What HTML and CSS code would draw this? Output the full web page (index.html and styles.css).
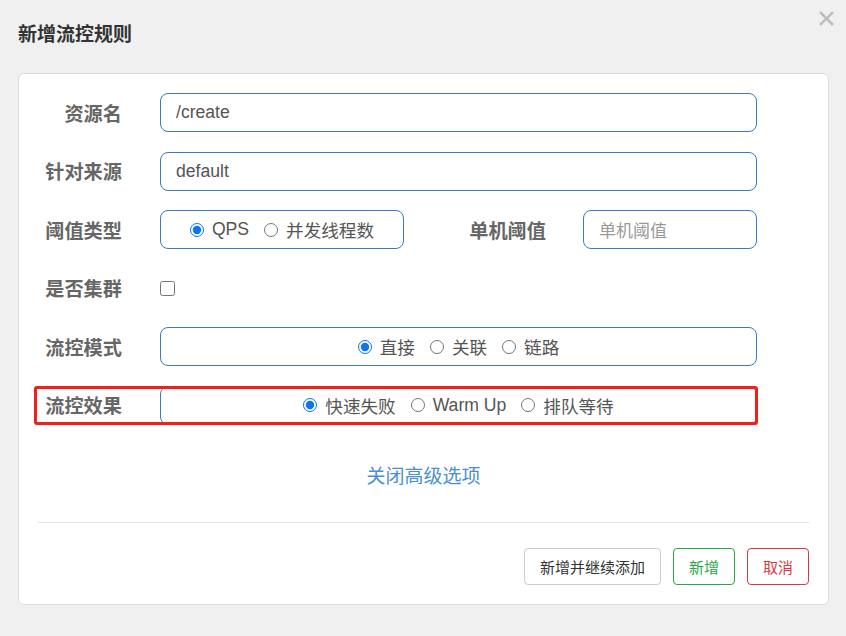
FILE: index.html
```html
<!DOCTYPE html>
<html lang="zh-CN">
<head>
<meta charset="utf-8">
<title>新增流控规则</title>
<link rel="stylesheet" href="styles.css">
</head>
<body>
<div class="dialog">
  <div class="header">
    <h3 class="title">新增流控规则</h3>
    <button class="close" type="button" aria-label="close">
      <svg width="15" height="15" viewBox="0 0 15 15"><path d="M2 2 L13 13 M13 2 L2 13" stroke="#bdbdbd" stroke-width="2.6" stroke-linecap="square"/></svg>
    </button>
  </div>
  <div class="card">
    <form class="form">
      <div class="row">
        <label class="label">资源名</label>
        <div class="input">/create</div>
      </div>
      <div class="row">
        <label class="label">针对来源</label>
        <div class="input">default</div>
      </div>
      <div class="row">
        <label class="label">阈值类型</label>
        <div class="group group-small">
          <label class="opt"><input type="radio" name="t" checked><span>QPS</span></label>
          <label class="opt"><input type="radio" name="t"><span>并发线程数</span></label>
        </div>
        <label class="label label-wide">单机阈值</label>
        <div class="input placeholder">单机阈值</div>
      </div>
      <div class="row">
        <label class="label">是否集群</label>
        <input class="check" type="checkbox">
      </div>
      <div class="row">
        <label class="label">流控模式</label>
        <div class="group">
          <label class="opt"><input type="radio" name="m" checked><span>直接</span></label>
          <label class="opt"><input type="radio" name="m"><span>关联</span></label>
          <label class="opt"><input type="radio" name="m"><span>链路</span></label>
        </div>
      </div>
      <div class="row row-marked">
        <label class="label">流控效果</label>
        <div class="group">
          <label class="opt"><input type="radio" name="e" checked><span>快速失败</span></label>
          <label class="opt"><input type="radio" name="e"><span>Warm Up</span></label>
          <label class="opt"><input type="radio" name="e"><span>排队等待</span></label>
        </div>
        <div class="mark"></div>
      </div>
    </form>
    <div class="toggle"><a class="link">关闭高级选项</a></div>
    <div class="divider"></div>
    <div class="footer">
      <button class="btn btn-default" type="button">新增并继续添加</button>
      <button class="btn btn-green" type="button">新增</button>
      <button class="btn btn-red" type="button">取消</button>
    </div>
  </div>
</div>
</body>
</html>
```
FILE: styles.css
```css
* { box-sizing: border-box; }
html, body {
  margin: 0;
  padding: 0;
  background: #f0f0f0;
  font-family: "Liberation Sans", "Noto Sans CJK SC", Arial, sans-serif;
}
.dialog {
  position: relative;
  width: 846px;
  height: 636px;
  padding: 0 17px 0 18px;
}
.header {
  height: 73px;
  display: flex;
  align-items: flex-start;
  padding-top: 19px;
}
.title {
  margin: 0;
  font-size: 19px;
  line-height: 28px;
  font-weight: bold;
  color: #333;
  font-family: "Noto Sans CJK SC", sans-serif;
}
.close {
  position: absolute;
  top: 11px;
  right: 12px;
  width: 15px;
  height: 15px;
  padding: 0;
  border: 0;
  background: none;
  display: flex;
}
.card {
  background: #fff;
  border: 1px solid #dcdcdc;
  border-radius: 6px;
  padding: 19px 19px 19px 19px;
}
.form {
  display: flex;
  flex-direction: column;
  gap: 19.5px;
  width: 719px;
}
.row {
  position: relative;
  display: flex;
  align-items: center;
  height: 39px;
}
.label {
  width: 84px;
  flex: none;
  margin-right: 38px;
  text-align: right;
  font-family: "Noto Sans CJK SC", sans-serif;
  font-weight: bold;
  font-size: 19.2px;
  color: #666;
}
.label-wide {
  width: 142px;
  margin-right: 37px;
}
.input {
  flex: 1;
  height: 39px;
  border: 1px solid #3b7bbd;
  border-radius: 8px;
  padding: 0 15px;
  display: flex;
  align-items: center;
  font-size: 17.6px;
  color: #555;
}
.placeholder {
  color: #999;
  font-family: "Noto Sans CJK SC", sans-serif;
  font-size: 17px;
}
.group {
  flex: 1;
  height: 39px;
  border: 1px solid #3b7bbd;
  border-radius: 8px;
  display: flex;
  align-items: center;
  justify-content: center;
  gap: 15px;
}
.group-small {
  flex: none;
  width: 244px;
}
.opt {
  display: flex;
  align-items: center;
  gap: 8px;
  font-size: 17.6px;
  color: #555;
  font-family: "Liberation Sans", "Noto Sans CJK SC", sans-serif;
}
.opt input {
  margin: 0;
  width: 14px;
  height: 14px;
  accent-color: #0b74f0;
}
.check {
  margin: 1px 0 0 0;
  width: 15px;
  height: 15px;
}
.mark {
  position: absolute;
  left: -4px;
  right: -1px;
  top: 0;
  bottom: 0;
  border: 3px solid #f2201a;
  border-radius: 3px;
  pointer-events: none;
}
.toggle {
  margin-top: 38px;
  height: 24px;
  display: flex;
  justify-content: center;
}
.link {
  font-family: "Noto Sans CJK SC", sans-serif;
  font-size: 19px;
  line-height: 24px;
  color: #4a8fd4;
  cursor: pointer;
}
.divider {
  margin-top: 35px;
  height: 1px;
  background: #e3e3e3;
}
.footer {
  display: flex;
  justify-content: flex-end;
  gap: 12px;
  padding-top: 25px;
}
.btn {
  height: 37px;
  padding: 0 15px;
  background: #fff;
  border: 1px solid #ccc;
  border-radius: 4px;
  font-family: "Noto Sans CJK SC", sans-serif;
  font-size: 15px;
  color: #333;
}
.btn-green {
  border-color: #28a745;
  color: #28a745;
}
.btn-red {
  border-color: #dc3545;
  color: #dc3545;
}
```
